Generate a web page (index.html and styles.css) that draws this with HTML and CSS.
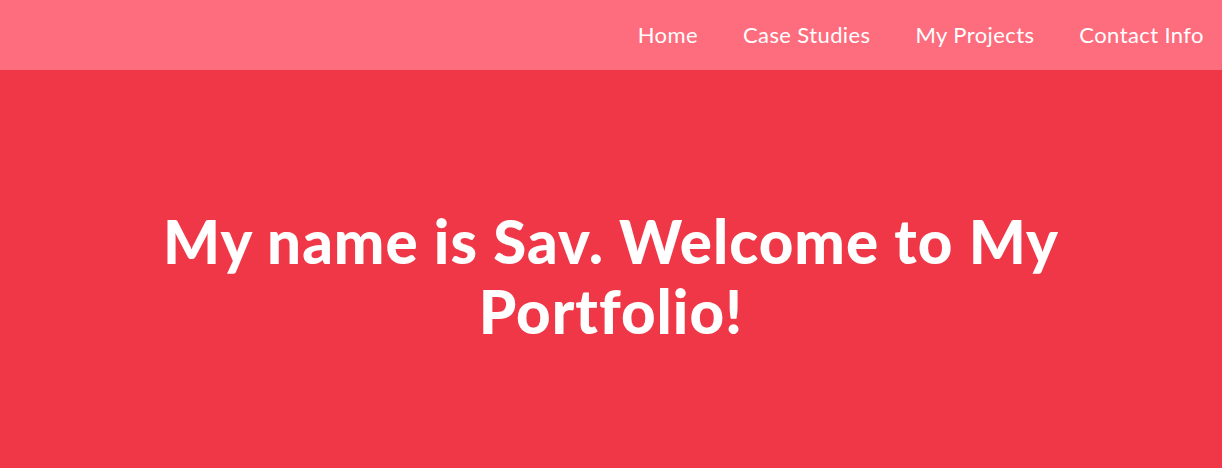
FILE: index.html
```html
<!DOCTYPE html>
<html lang="en">
<head>
<meta charset="utf-8">
<title>Sav's Portfolio</title>
<link rel="stylesheet" href="styles.css">
</head>
<body>
<header class="topbar">
  <nav class="nav">
    <a class="nav-link" href="#">Home</a>
    <a class="nav-link" href="#">Case Studies</a>
    <a class="nav-link" href="#">My Projects</a>
    <a class="nav-link" href="#">Contact Info</a>
  </nav>
</header>
<main class="hero">
  <h1 class="hero-title">My name is Sav. Welcome to My Portfolio!</h1>
</main>
</body>
</html>
```

FILE: styles.css
```css
* { box-sizing: border-box; }
html, body { margin: 0; padding: 0; }
body {
  font-family: "Lato", "Open Sans", sans-serif;
  background: #ef3747;
  color: #fff;
}
.topbar {
  height: 70px;
  background: #fe6d7e;
  display: flex;
  justify-content: flex-end;
  align-items: center;
  padding-right: 18px;
  padding-bottom: 2px;
}
.nav {
  display: flex;
  gap: 45px;
}
.nav-link {
  color: #fff;
  text-decoration: none;
  font-size: 22px;
  font-weight: 400;
  letter-spacing: 0.4px;
}
.hero {
  height: 412px;
  display: flex;
  align-items: center;
  justify-content: center;
}
.hero-title {
  margin: 0;
  max-width: 1000px;
  text-align: center;
  font-size: 60px;
  line-height: 70px;
  font-weight: 900;
  letter-spacing: 1px;
}
```
